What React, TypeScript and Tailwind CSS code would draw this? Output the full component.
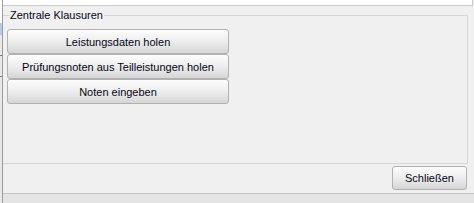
import React from "react";

function WinButton({ children, className = "" }: { children: React.ReactNode; className?: string }) {
  return (
    <button
      type="button"
      className={
        "flex items-center justify-center rounded-[3px] border border-[#b1b1b1] bg-gradient-to-b from-[#fdfdfd] via-[#ededed] to-[#d6d6d6] pt-[1px] text-[11px] text-[#050514] leading-none " +
        className
      }
    >
      {children}
    </button>
  );
}

export default function App() {
  return (
    <div
      className="flex h-[203px] w-[474px] bg-[#f0f0f0] overflow-hidden"
      style={{ fontFamily: '"Liberation Sans", Arial, sans-serif' }}
    >
      {/* left edge of neighbouring panel */}
      <div className="flex w-[3px] flex-col border-r border-[#9c9c9c] bg-[#e8e8e8]">
        <div className="h-[23px] bg-white" />
        <div className="h-[12px] bg-[#b9cbe0]" />
        <div className="h-[20px] bg-[#e8e8e8]" />
        <div className="h-[1px] bg-[#7a7a7a]" />
        <div className="h-[20px]" />
        <div className="h-[1px] bg-[#7a7a7a]" />
        <div className="flex-1" />
      </div>

      <div className="flex flex-1 flex-col">
        {/* white box above */}
        <div className="mr-[1px] h-[6px] border-b border-r border-[#c9c9c9] bg-white" />

        {/* group box */}
        <div className="relative mr-[6px] mt-[9px] h-[149px] border-b border-r border-t border-[#d6d6d6] pl-[4px] pt-[13px]">
          <span className="absolute left-[7px] top-[-7px] bg-[#f0f0f0] pr-[1px] text-[11px] leading-[13px] text-[#050514]">
            Zentrale Klausuren
          </span>
          <div className="flex w-[222px] flex-col">
            <WinButton className="h-[25px] w-full">Leistungsdaten holen</WinButton>
            <WinButton className="h-[25px] w-full">Prüfungsnoten aus Teilleistungen holen</WinButton>
            <WinButton className="h-[25px] w-full">Noten eingeben</WinButton>
          </div>
        </div>

        {/* footer button */}
        <div className="mr-[7px] mt-[2px] flex justify-end">
          <WinButton className="h-[24px] w-[75px]">Schließen</WinButton>
        </div>

        <div className="mt-[3px] flex-1 border-t border-[#c3c3c3] bg-[#e4e4e4]" />
      </div>
    </div>
  );
}
